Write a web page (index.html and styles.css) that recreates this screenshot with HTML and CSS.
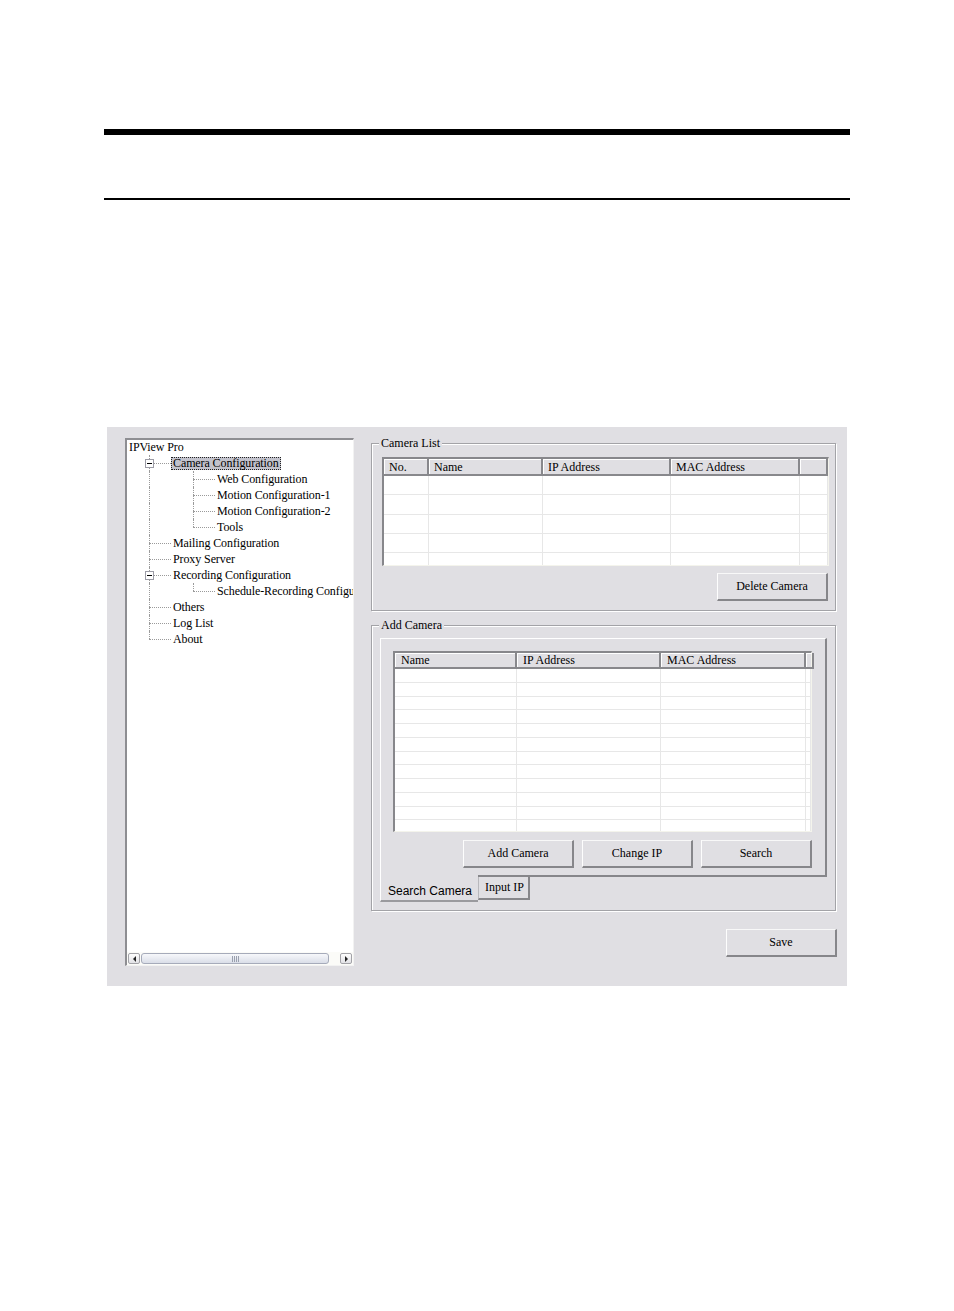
FILE: index.html
```html
<!DOCTYPE html>
<html>
<head>
<meta charset="utf-8">
<title>IPView Pro - Camera Configuration</title>
<link rel="stylesheet" href="styles.css">
</head>
<body>
<div class="doc">
  <div class="rule-thick"></div>
  <div class="rule-thin"></div>

  <div class="app">
    <div class="tree">
      <div class="tree-list">
        <div class="node"><span class="label root">IPView Pro</span></div>
        <div class="node"><i class="g"></i><i class="g tee"><b class="exp"></b></i><span class="label sel">Camera Configuration</span></div>
        <div class="node"><i class="g"></i><i class="g pass"></i><i class="g"></i><i class="g tee"></i><span class="label">Web Configuration</span></div>
        <div class="node"><i class="g"></i><i class="g pass"></i><i class="g"></i><i class="g tee"></i><span class="label">Motion Configuration-1</span></div>
        <div class="node"><i class="g"></i><i class="g pass"></i><i class="g"></i><i class="g tee"></i><span class="label">Motion Configuration-2</span></div>
        <div class="node"><i class="g"></i><i class="g pass"></i><i class="g"></i><i class="g elbow"></i><span class="label">Tools</span></div>
        <div class="node"><i class="g"></i><i class="g tee"></i><span class="label">Mailing Configuration</span></div>
        <div class="node"><i class="g"></i><i class="g tee"></i><span class="label">Proxy Server</span></div>
        <div class="node"><i class="g"></i><i class="g tee"><b class="exp"></b></i><span class="label">Recording Configuration</span></div>
        <div class="node"><i class="g"></i><i class="g pass"></i><i class="g"></i><i class="g elbow"></i><span class="label">Schedule-Recording Configuration</span></div>
        <div class="node"><i class="g"></i><i class="g tee"></i><span class="label">Others</span></div>
        <div class="node"><i class="g"></i><i class="g tee"></i><span class="label">Log List</span></div>
        <div class="node"><i class="g"></i><i class="g elbow"></i><span class="label">About</span></div>
      </div>
      <div class="hscroll">
        <span class="sb-btn"><i class="arrow-l"></i></span>
        <span class="sb-thumb"><i class="grip"></i></span>
        <span class="sb-space"></span>
        <span class="sb-btn"><i class="arrow-r"></i></span>
      </div>
    </div>

    <div class="right">
      <fieldset class="group group-list">
        <legend class="legend-list">Camera List</legend>
        <div class="lv lv-cams">
          <div class="lv-head">
            <span class="hc w45">No.</span><span class="hc w114">Name</span><span class="hc w128">IP Address</span><span class="hc w129">MAC Address</span><span class="hc w28"></span>
          </div>
          <div class="lv-body body-cams">
            <div class="row r19"><span class="c w45"></span><span class="c w114"></span><span class="c w128"></span><span class="c w129"></span><span class="c w28"></span></div>
            <div class="row r19"><span class="c w45"></span><span class="c w114"></span><span class="c w128"></span><span class="c w129"></span><span class="c w28"></span></div>
            <div class="row r19"><span class="c w45"></span><span class="c w114"></span><span class="c w128"></span><span class="c w129"></span><span class="c w28"></span></div>
            <div class="row r19"><span class="c w45"></span><span class="c w114"></span><span class="c w128"></span><span class="c w129"></span><span class="c w28"></span></div>
            <div class="row r19"><span class="c w45"></span><span class="c w114"></span><span class="c w128"></span><span class="c w129"></span><span class="c w28"></span></div>
          </div>
        </div>
        <div class="btn-row btn-row-del">
          <button class="btn">Delete Camera</button>
        </div>
      </fieldset>

      <fieldset class="group group-add">
        <legend class="legend-add">Add Camera</legend>
        <div class="tabpane">
          <div class="lv lv-search">
            <div class="lv-head head-search">
              <span class="hc hs w122">Name</span><span class="hc hs w144">IP Address</span><span class="hc hs w145">MAC Address</span><span class="hc hs w5"></span>
            </div>
            <div class="lv-body body-search">
              <div class="row r14"><span class="c w122"></span><span class="c w144"></span><span class="c w145"></span><span class="c w5"></span></div>
              <div class="row r14"><span class="c w122"></span><span class="c w144"></span><span class="c w145"></span><span class="c w5"></span></div>
              <div class="row r14"><span class="c w122"></span><span class="c w144"></span><span class="c w145"></span><span class="c w5"></span></div>
              <div class="row r14"><span class="c w122"></span><span class="c w144"></span><span class="c w145"></span><span class="c w5"></span></div>
              <div class="row r14"><span class="c w122"></span><span class="c w144"></span><span class="c w145"></span><span class="c w5"></span></div>
              <div class="row r14"><span class="c w122"></span><span class="c w144"></span><span class="c w145"></span><span class="c w5"></span></div>
              <div class="row r14"><span class="c w122"></span><span class="c w144"></span><span class="c w145"></span><span class="c w5"></span></div>
              <div class="row r14"><span class="c w122"></span><span class="c w144"></span><span class="c w145"></span><span class="c w5"></span></div>
              <div class="row r14"><span class="c w122"></span><span class="c w144"></span><span class="c w145"></span><span class="c w5"></span></div>
              <div class="row r14"><span class="c w122"></span><span class="c w144"></span><span class="c w145"></span><span class="c w5"></span></div>
              <div class="row r14"><span class="c w122"></span><span class="c w144"></span><span class="c w145"></span><span class="c w5"></span></div>
              <div class="row r14"><span class="c w122"></span><span class="c w144"></span><span class="c w145"></span><span class="c w5"></span></div>
            </div>
          </div>
          <div class="btn-row btn-row-add">
            <button class="btn">Add Camera</button>
            <button class="btn">Change IP</button>
            <button class="btn">Search</button>
          </div>
        </div>
        <div class="tabs">
          <span class="tab tab-active">Search Camera</span>
          <span class="tab tab-idle">Input IP</span>
        </div>
      </fieldset>

      <button class="btn btn-save">Save</button>
    </div>
  </div>
</div>
</body>
</html>
```

FILE: styles.css
```css
* { box-sizing: border-box; }

body {
  margin: 0;
  background: #ffffff;
  font-family: "Liberation Serif", "Times New Roman", serif;
  font-size: 12px;
  color: #000000;
}

.doc { padding-top: 129px; }

.rule-thick {
  margin-left: 104px;
  width: 746px;
  height: 6px;
  background: #000;
}

.rule-thin {
  margin: 63px 0 0 104px;
  width: 746px;
  height: 2px;
  background: #000;
}

.app {
  margin: 227px 0 0 107px;
  width: 740px;
  height: 559px;
  background: #e0dfe3;
  display: flex;
  align-items: flex-start;
  padding: 9px 0 0 18px;
}

/* ---------- tree ---------- */
.tree {
  width: 229px;
  height: 528px;
  margin-top: 2px;
  background: #ffffff;
  border-style: solid;
  border-width: 2px 1px 1px 2px;
  border-color: #8e8e92 #f2f2f2 #f2f2f2 #8e8e92;
  display: flex;
  flex-direction: column;
}

.tree-list {
  flex: 1;
  overflow: hidden;
  white-space: nowrap;
  padding-top: 0;
  margin-top: -1px;
  letter-spacing: -0.1px;
}

.node {
  display: flex;
  align-items: center;
  height: 16px;
}

.g {
  flex: none;
  width: 22px;
  height: 16px;
  position: relative;
  font-style: normal;
}

.g.pass { border-left: 1px dotted #9a9a9a; }

.g.tee::before,
.g.elbow::before {
  content: "";
  position: absolute;
  left: 0;
  top: 0;
  height: 16px;
  border-left: 1px dotted #9a9a9a;
}
.g.elbow::before { height: 8px; }

.g.tee::after,
.g.elbow::after {
  content: "";
  position: absolute;
  left: 0;
  top: 8px;
  width: 22px;
  border-top: 1px dotted #9a9a9a;
}

.exp {
  position: absolute;
  left: -4px;
  top: 4px;
  width: 9px;
  height: 9px;
  border: 1px solid #9c9ca6;
  background: #fff;
  z-index: 1;
}
.exp::after {
  content: "";
  position: absolute;
  left: 1px;
  top: 3px;
  width: 5px;
  height: 1px;
  background: #000;
}

.label {
  flex: none;
  line-height: 11px;
  height: 13px;
  padding: 0 1px;
  border: 1px solid transparent;
}
.label.root { padding-left: 2px; border: 0; line-height: 13px; }
.label.sel {
  background: #c2c2cc;
  border: 1px dotted #222;
}

.hscroll {
  height: 13px;
  display: flex;
  align-items: center;
  padding: 0 1px 0 1px;
  background: #fbfbf8;
}

.sb-btn {
  flex: none;
  width: 12px;
  height: 11px;
  border: 1px solid #a3a3a8;
  border-radius: 2px;
  background: linear-gradient(#fdfdfd, #e2e2e6);
  display: flex;
  align-items: center;
  justify-content: center;
}

.arrow-l, .arrow-r {
  width: 0;
  height: 0;
  border-top: 3px solid transparent;
  border-bottom: 3px solid transparent;
}
.arrow-l { border-right: 3px solid #222; }
.arrow-r { border-left: 3px solid #222; }

.sb-thumb {
  flex: none;
  width: 188px;
  height: 11px;
  margin-left: 1px;
  border: 1px solid #a6abba;
  border-radius: 3px;
  background: linear-gradient(#f7f8fb, #dadee8);
  display: flex;
  align-items: center;
  justify-content: center;
}

.grip {
  width: 7px;
  height: 6px;
  background: repeating-linear-gradient(90deg, #9aa0ae 0 1px, transparent 1px 2px);
}

.sb-space { flex: 1; }

/* ---------- right column ---------- */
.right {
  width: 465px;
  margin-left: 17px;
  display: flex;
  flex-direction: column;
}

.group {
  margin: 0;
  min-width: 0;
  border: 1px solid #a3a3a7;
  box-shadow: inset 1px 1px 0 #ffffff, 1px 1px 0 #ffffff;
}

.group legend {
  padding: 0 2px;
  line-height: 14px;
  font-size: 12px;
  background: #e0dfe3;
}

.group-list { padding: 7px 6px 9px 10px; }
.legend-list { margin-left: -3px; }

.group-add { margin-top: 7px; padding: 6px 8px 8px 8px; }
.legend-add { margin-left: -1px; }

/* list views */
.lv {
  background: #ffffff;
  border-style: solid;
  border-width: 2px 1px 1px 2px;
  border-color: #87878b #f4f4ec #f4f4ec #87878b;
}

.lv-head {
  display: flex;
  height: 17px;
  background: #e0dfe3;
}
.head-search { height: 16px; }

.hc {
  flex: none;
  height: 100%;
  padding-left: 5px;
  line-height: 16px;
  border-right: 2px solid #88888c;
  border-bottom: 2px solid #88888c;
  box-shadow: inset 1px 1px 0 #ffffff;
  white-space: nowrap;
  overflow: hidden;
}
.hc.hs { padding-left: 6px; line-height: 15px; }

.lv-body { overflow: hidden; }
.body-cams { height: 89px; }
.body-search { height: 162px; }

.row {
  display: flex;
  border-bottom: 1px solid #e7e7e7;
}
.r19 { height: 19.33px; }
.r14 { height: 13.75px; }

.c {
  flex: none;
  height: 100%;
  border-right: 1px solid #e7e7e7;
}

.w45 { width: 45px; }
.w114 { width: 114px; }
.w128 { width: 128px; }
.w129 { width: 129px; }
.w28 { width: 28px; }
.w122 { width: 122px; }
.w144 { width: 144px; }
.w145 { width: 145px; }
.w5 { width: 5px; }

/* buttons */
.btn-row {
  display: flex;
  justify-content: flex-end;
  gap: 8px;
}
.btn-row-del { margin-top: 7px; padding-right: 1px; }
.btn-row-add { margin-top: 8px; }

.btn {
  flex: none;
  width: 111px;
  height: 28px;
  padding: 0;
  margin: 0;
  font-family: "Liberation Serif", "Times New Roman", serif;
  font-size: 12px;
  color: #000;
  background: #e0dfe3;
  border-style: solid;
  border-width: 1px 2px 2px 1px;
  border-color: #f8f8f8 #86868a #86868a #fdfdfd;
  border-radius: 0;
}

.btn-save {
  align-self: flex-end;
  margin-top: 18px;
  margin-right: -1px;
}

/* tab pane */
.tabpane {
  border-style: solid;
  border-width: 1px 2px 2px 1px;
  border-color: #ffffff #86868a #86868a #ffffff;
  padding: 12px 13px 7px 12px;
}

.tabs {
  display: flex;
  align-items: flex-start;
}

.tab { flex: none; }

.tab-active {
  margin-top: -2px;
  width: 98px;
  height: 27px;
  background: #e0dfe3;
  border-left: 1px solid #ffffff;
  border-bottom: 2px solid #9a9a9e;
  padding: 8px 0 0 7px;
  font-family: "Liberation Sans", Arial, sans-serif;
  font-size: 12px;
  line-height: 16px;
}

.tab-idle {
  width: 52px;
  height: 23px;
  border-style: solid;
  border-width: 0 2px 2px 1px;
  border-color: #9a9a9e #86868a #86868a #b8b8bc;
  padding: 3px 0 0 6px;
  line-height: 14px;
}
```
